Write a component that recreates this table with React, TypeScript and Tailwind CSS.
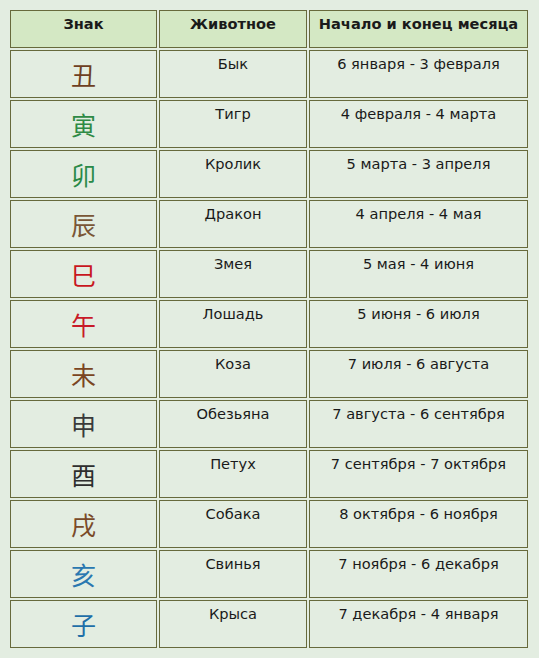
import React from "react";

const rows: { ch: string; color: string; animal: string; dates: string }[] = [
  { ch: "丑", color: "#6e3f22", animal: "Бык", dates: "6 января - 3 февраля" },
  { ch: "寅", color: "#2f8a45", animal: "Тигр", dates: "4 февраля - 4 марта" },
  { ch: "卯", color: "#2a8a48", animal: "Кролик", dates: "5 марта - 3 апреля" },
  { ch: "辰", color: "#7a5636", animal: "Дракон", dates: "4 апреля - 4 мая" },
  { ch: "巳", color: "#c8161e", animal: "Змея", dates: "5 мая - 4 июня" },
  { ch: "午", color: "#c81a28", animal: "Лошадь", dates: "5 июня - 6 июля" },
  { ch: "未", color: "#7a4522", animal: "Коза", dates: "7 июля - 6 августа" },
  { ch: "申", color: "#3a3a3a", animal: "Обезьяна", dates: "7 августа - 6 сентября" },
  { ch: "酉", color: "#2e2e2e", animal: "Петух", dates: "7 сентября - 7 октября" },
  { ch: "戌", color: "#7a4a28", animal: "Собака", dates: "8 октября - 6 ноября" },
  { ch: "亥", color: "#2a78b0", animal: "Свинья", dates: "7 ноября - 6 декабря" },
  { ch: "子", color: "#1f6fa8", animal: "Крыса", dates: "7 декабря - 4 января" },
];

const cell = "border border-[#676a3c] bg-[#e3ede1] text-center";
const head = "border border-[#676a3c] bg-[#d4e8c4] text-center font-bold h-[38px] pt-[4px]";

export default function App() {
  return (
    <div
      className="w-[539px] h-[658px] bg-[#e3ede1] pt-[8px] pl-[8px] text-[#1a1a1a]"
      style={{ fontFamily: '"DejaVu Sans", "Noto Sans CJK SC", sans-serif' }}
    >
      <div className="grid grid-cols-[147px_148px_219px] gap-[2px] p-[2px] w-[522px] text-[14.6px] leading-[18px]">
        <div className={head}>Знак</div>
        <div className={head}>Животное</div>
        <div className={head}>Начало и конец месяца</div>
        {rows.map((r) => (
          <React.Fragment key={r.animal}>
            <div className={`${cell} h-[48px] flex items-center justify-center`}>
              <span
                className="text-[25px] leading-none"
                style={{ color: r.color, fontFamily: '"Noto Sans CJK SC", sans-serif' }}
              >
                {r.ch}
              </span>
            </div>
            <div className={`${cell} h-[48px] pt-[4px]`}>{r.animal}</div>
            <div className={`${cell} h-[48px] pt-[4px]`}>{r.dates}</div>
          </React.Fragment>
        ))}
      </div>
    </div>
  );
}
